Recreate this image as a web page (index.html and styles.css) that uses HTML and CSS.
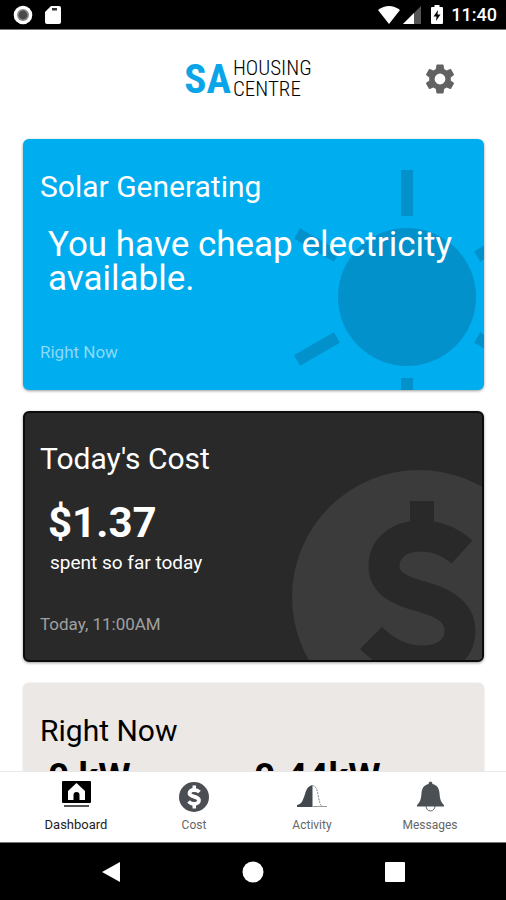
FILE: index.html
```
<!DOCTYPE html>
<html lang="en">
<head>
<meta charset="utf-8">
<meta name="viewport" content="width=device-width, initial-scale=1">
<title>SA Housing Centre</title>
<link rel="stylesheet" href="styles.css">
</head>

<body>

<!-- STATUS BAR -->
<div class="statusBar">
<svg width="20" height="20" viewBox="0 0 20 20"><circle cx="10" cy="10" r="9.3" fill="#fff"/><circle cx="10" cy="10" r="6" fill="#8a8a8a"/><circle cx="10" cy="10" r="4.4" fill="#4a4a4a"/></svg>
<svg width="16" height="20" viewBox="0 0 16 20"><path fill="#fff" d="M6 1h8q2 0 2 2v14q0 2-2 2H2q-2 0-2-2V7z"/><path fill="#333" d="M7 3h5v2.500H7z"/></svg>
<div class="statusRight">
<svg width="24" height="20" viewBox="0 0 24 20"><path fill="#fff" d="M1 5Q12-3 23 5L12 19z"/></svg>
<svg width="18" height="20" viewBox="0 0 18 20"><path fill="#555" d="M18 1v18H0z"/><path fill="#fff" d="M11 8v11H0z"/></svg>
<svg class="battery" width="12" height="20" viewBox="0 0 12 20"><path fill="#fff" d="M3.500 0h5v2H11q1 0 1 1v15q0 1-1 1H1q-1 0-1-1V3q0-1 1-1h2.500z"/><path fill="#000" d="M7 5L2.500 11.500H5.500L5 16L9.500 9.500H6.500z"/></svg>
<span class="clock">11:40</span>
</div>
</div>

<!-- CONTENT -->
<main class="content">
<header class="header">
<h1 class="logo"><span class="logoMark">SA</span><span class="logoName">HOUSING<br>CENTRE</span></h1>
<button class="settings" type="button" aria-label="Settings">
<svg width="36" height="36" viewBox="0 0 24 24"><path fill="#626262" d="M19.140 12.940c.04-.3.06-.61.06-.94 0-.32-.02-.64-.07-.94l2.030-1.580c.18-.14.23-.41.12-.61l-1.920-3.320c-.12-.22-.37-.29-.59-.22l-2.390.96c-.5-.38-1.030-.7-1.620-.94l-.36-2.540c-.04-.24-.24-.41-.48-.41h-3.840c-.24 0-.43.17-.47.41l-.36 2.540c-.59.24-1.130.57-1.620.94l-2.390-.96c-.22-.08-.47 0-.59.22L2.740 8.870c-.12.21-.08.47.12.61l2.030 1.580c-.05.3-.09.63-.09.94s.02.64.07.94l-2.030 1.580c-.18.14-.23.41-.12.61l1.920 3.320c.12.22.37.29.59.22l2.390-.96c.5.38 1.030.7 1.620.94l.36 2.540c.05.24.24.41.48.41h3.840c.24 0 .44-.17.47-.41l.36-2.540c.59-.24 1.130-.56 1.620-.94l2.390.96c.22.08.47 0 .59-.22l1.920-3.320c.12-.22.07-.47-.12-.61zM12 15.600a3.600 3.600 0 1 1 0-7.200 3.600 3.600 0 0 1 0 7.200z"/></svg>
</button>
</header>

<section class="card solar">
<svg class="cardArt" width="200" height="251" viewBox="284 139 200 251">
<g fill="#0391cb">
<circle cx="407" cy="297" r="69"/>
<rect x="401" y="170" width="12" height="46"/>
<rect x="401" y="170" width="12" height="46" transform="rotate(60 407 297)"/>
<rect x="401" y="170" width="12" height="46" transform="rotate(120 407 297)"/>
<rect x="401" y="170" width="12" height="46" transform="rotate(180 407 297)"/>
<rect x="401" y="170" width="12" height="46" transform="rotate(240 407 297)"/>
<rect x="401" y="170" width="12" height="46" transform="rotate(300 407 297)"/>
</g>
</svg>
<h2 class="cardTitle">Solar Generating</h2>
<p class="message">You have cheap electricity available.</p>
<p class="cardTime">Right Now</p>
</section>

<section class="card cost">
<svg class="cardArt" width="198" height="191" viewBox="284 469 198 191">
<circle cx="419" cy="597" r="127" fill="#3b3b3b"/>
<path fill="#292929" d="M410 501h24v28h-24z"/>
<path fill="none" stroke="#292929" stroke-width="31" d="M462 552C451 542 438 536 421 536C398 536 384 549 384 566C384 584 400 591 423 597C448 604 460 614 460 631C460 650 444 661 422 661C402 661 385 652 371 638"/>
</svg>
<h2 class="cardTitle">Today's Cost</h2>
<p class="amount">$1.37</p>
<p class="note">spent so far today</p>
<p class="cardTime">Today, 11:00AM</p>
</section>

<section class="card usage">
<h2 class="cardTitle">Right Now</h2>
<div class="readings">
<p class="reading">0 kW</p>
<p class="reading">0.44kW</p>
</div>
</section>
</main>

<!-- TABS -->
<nav class="tabs">
<a href="#" class="tab active">
<svg width="32" height="32" viewBox="0 0 32 32"><rect x="2" y="1" width="29" height="22" rx="1" fill="#000"/><path fill="#fff" d="M16.500 3L25 11v9h-5.500v-5a3 3 0 0 0-6 0v5H8v-9z"/><path fill="#555" d="M4 25h25v2H4z"/></svg>
<span>Dashboard</span></a>
<a href="#" class="tab">
<svg width="32" height="32" viewBox="0 0 32 32"><circle cx="16" cy="17" r="15" fill="#4b4e52"/><path fill="none" stroke="#fff" stroke-width="3.800" d="M21.500 12C20 10.500 18 10 16 10C13.500 10 11.500 11.300 11.500 13.300C11.500 17.500 21 15.800 21 20.300C21 22.600 18.500 24 16 24C14 24 12 23 10.500 21.500"/><path fill="#fff" d="M14.500 5.500h3.500v4h-3.500zM14.500 24.500h3.500v4h-3.500z"/></svg>
<span>Cost</span></a>
<a href="#" class="tab">
<svg width="32" height="32" viewBox="0 0 32 32"><path fill="#43484e" d="M1 27v-2C6 24 7 20 9 14C10.500 9 12 6 16.500 5V27z"/><path fill="none" stroke="#888" stroke-width="1" stroke-dasharray="2 1" d="M16.500 5.500C21 6 21.500 12 22.500 17C23.500 22 24 25 26 26"/><path fill="#999" d="M16 26h15v1H16z"/></svg>
<span>Activity</span></a>
<a href="#" class="tab">
<svg width="32" height="32" viewBox="0 0 32 32"><path fill="none" stroke="#666" stroke-width="1" d="M12 26a4.500 5 0 0 0 9 0"/><path fill="#4b5054" d="M16.500 1.500q2 0 2 2.500C23 5 25 8 25.500 13C26 20 27 22 30 25v1.500H3V25C6 22 7 20 7.500 13C8 8 10 5 14.500 4q0-2.500 2-2.500z"/></svg>
<span>Messages</span></a>
</nav>

<!-- SYSTEM BUTTONS -->
<div class="systemBar">
<button type="button" aria-label="Back"><svg width="22" height="22" viewBox="0 0 22 22"><path fill="#fff" d="M20 1v20L2 11z"/></svg></button>
<button type="button" aria-label="Home"><svg width="22" height="22" viewBox="0 0 22 22"><circle cx="11" cy="11" r="10.500" fill="#fff"/></svg></button>
<button type="button" aria-label="Recent apps"><svg width="22" height="22" viewBox="0 0 22 22"><rect x="1" y="1" width="20" height="20" rx="1" fill="#fff"/></svg></button>
</div>

</body>
</html>
```
FILE: styles.css
```
*
{
box-sizing:border-box;
}
body
{
display:flex;
flex-direction:column;
height:100vh;
margin:0;
background:#fff;
font-family:Roboto, "Liberation Sans", sans-serif;
overflow:hidden;
}
h1, h2, p
{
margin:0;
font-weight:400;
}
svg
{
display:block;
}
button
{
padding:0;
border:0;
background:none;
}

/* status bar */
.statusBar
{
display:flex;
flex:none;
align-items:center;
gap:12px;
height:30px;
padding:0 9px 0 13px;
background:#000;
border-bottom:1px solid #777;
color:#fff;
}
.statusRight
{
display:flex;
align-items:center;
gap:2px;
margin-left:auto;
}
.battery
{
margin:0 6px 0 8px;
}
.clock
{
font-size:18px;
font-weight:500;
line-height:20px;
}

/* header */
.content
{
flex:1;
min-height:0;
overflow:hidden;
}
.header
{
display:grid;
grid-template-columns:1fr auto 1fr;
align-items:center;
height:109px;
padding:0 24px 12px 14px;
}
.logo
{
display:flex;
grid-column:2;
align-items:center;
gap:2px;
font-family:"Roboto Condensed", "Liberation Sans Narrow", "Liberation Sans", sans-serif;
}
.logoMark
{
color:#0aa5e8;
font-size:41px;
font-weight:700;
line-height:40px;
}
.logoName
{
font-size:21px;
font-weight:300;
line-height:21px;
color:#000;
}
.settings
{
justify-self:end;
margin-right:24px;
}

/* cards */
.card
{
position:relative;
min-height:251px;
margin:0 22px 21px 23px;
padding:30px 17px;
border-radius:6px;
overflow:hidden;
box-shadow:0 1px 3px rgba(0,0,0,.4);
}
.cardArt
{
position:absolute;
right:0;
bottom:0;
}
.cardTitle,
.message
{
position:relative;
}
.cardTitle
{
font-size:30px;
line-height:36px;
}
.cardTime
{
position:absolute;
bottom:26px;
font-size:17px;
line-height:24px;
}
.solar
{
background:#00adef;
color:#fff;
}
.solar .cardTime
{
color:#8cd9f8;
}
.message
{
padding:23px 8px 0;
font-size:35px;
line-height:34px;
}
.cost
{
padding:28px 15px;
background:#292929;
border:2px solid #0c0c0c;
color:#fff;
}
.cost .cardTime
{
bottom:24px;
color:#a0a0a0;
}
.amount
{
padding:21px 8px 0;
font-size:42px;
font-weight:700;
line-height:50px;
}
.note
{
padding:3px 10px 0;
font-size:19px;
line-height:24px;
}
.usage
{
background:#ebe8e5;
color:#000;
box-shadow:0 0 2px rgba(0,0,0,.15);
}
.readings
{
display:grid;
grid-template-columns:206px 1fr;
padding:4px 8px;
}
.reading
{
font-size:37px;
font-weight:700;
line-height:48px;
}

/* tabs */
.tabs
{
display:flex;
flex:none;
height:71px;
padding:0 17px;
border-top:1px solid #e8e8e8;
background:#fff;
}
.tab
{
display:flex;
flex:1;
flex-direction:column;
align-items:center;
gap:4px;
padding-top:8px;
color:#666;
font-size:12px;
line-height:18px;
text-decoration:none;
}
.tab.active
{
color:#222;
font-size:13px;
}

/* system buttons */
.systemBar
{
display:flex;
flex:none;
align-items:center;
justify-content:space-around;
height:58px;
padding:0 40px;
background:#000;
border-top:1px solid #777;
}
```
